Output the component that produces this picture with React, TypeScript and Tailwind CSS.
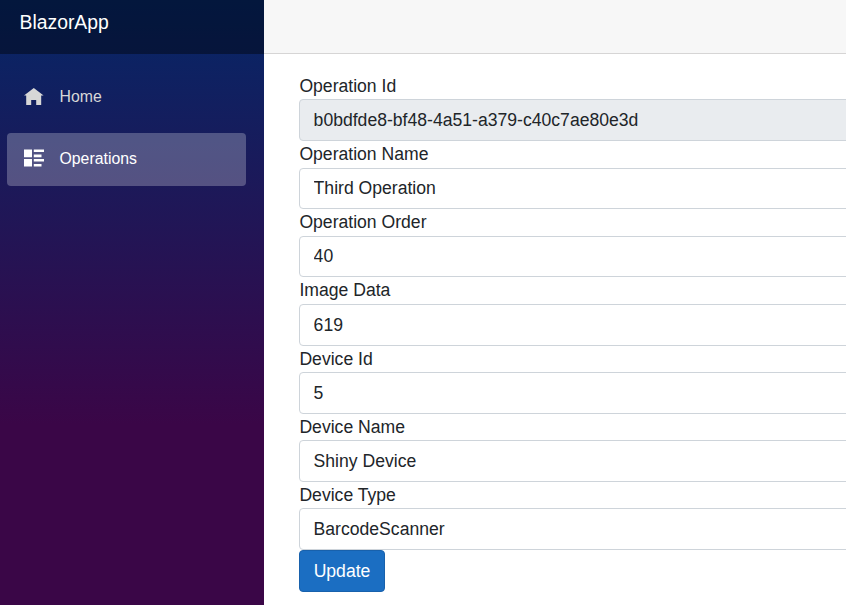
const fields = [
  { label: 'Operation Id', value: 'b0bdfde8-bf48-4a51-a379-c40c7ae80e3d', tone: 'bg-[#e9ecef]' },
  { label: 'Operation Name', value: 'Third Operation', tone: 'bg-white' },
  { label: 'Operation Order', value: '40', tone: 'bg-white' },
  { label: 'Image Data', value: '619', tone: 'bg-white pt-[2px]' },
  { label: 'Device Id', value: '5', tone: 'bg-white pt-[2px]' },
  { label: 'Device Name', value: 'Shiny Device', tone: 'bg-white' },
  { label: 'Device Type', value: 'BarcodeScanner', tone: 'bg-white' },
];

export default function App() {
  return (
    <div className="flex h-[605px] w-full overflow-hidden bg-white font-['Liberation_Sans',Arial,sans-serif] text-[17.6px] text-[#212529]">
      <aside className="h-full w-[264px] shrink-0 bg-[linear-gradient(180deg,rgb(5,39,103)_0%,#3a0647_70%)]">
        <div className="flex h-[54px] items-center bg-black/40 pb-[8px] pl-[19.5px] text-[19.36px] text-white">BlazorApp</div>
        <nav className="flex flex-col gap-[9px] pl-[7px] pr-[18px] pt-[17px] text-[15.84px]">
          <a className="flex h-[53px] items-center gap-[15.5px] rounded pb-[2px] pl-[17px] text-[#d7d7d7]">
            <svg className="mt-px h-[20px] w-[20px]" viewBox="0 0 20 20" fill="currentColor"><path d="M9.8 1L0 8.5h2.2V18h5v-5h5v5h5V8.5h2.4z" /></svg>
            Home
          </a>
          <a className="flex h-[53px] items-center gap-[15.5px] rounded bg-white/25 pb-[2px] pl-[17px] text-white">
            <svg className="h-[20px] w-[20px]" viewBox="0 0 20 20" fill="currentColor"><path d="M0 .5h8v7.7H0zM0 10h8v7.5H0zM9.8 .5H20V3H9.8zM9.8 5.5h7.7v2.7H9.8zM9.8 10H20v2.5H9.8zM9.8 15h7.7v2.5H9.8z" /></svg>
            Operations
          </a>
        </nav>
      </aside>
      <main className="min-w-0 flex-1">
        <header className="h-[54px] border-b border-[#d6d5d5] bg-[#f7f7f7]" />
        <form className="pl-[35px] pt-[19px]">
          {fields.map(({ label, value, tone }) => (
            <div key={label} className="h-[68.17px]">
              <label className="block h-[26.4px] pl-[0.4px] leading-[26.4px]">{label}</label>
              <input readOnly value={value} className={`block h-[41.77px] w-[600px] rounded border border-[#ced4da] px-[13.6px] text-[#212529] outline-none ${tone}`} />
            </div>
          ))}
          <button type="button" className="block h-[42px] w-[86px] rounded border border-[#1861ac] bg-[#1b6ec2] text-white">Update</button>
        </form>
      </main>
    </div>
  );
}
